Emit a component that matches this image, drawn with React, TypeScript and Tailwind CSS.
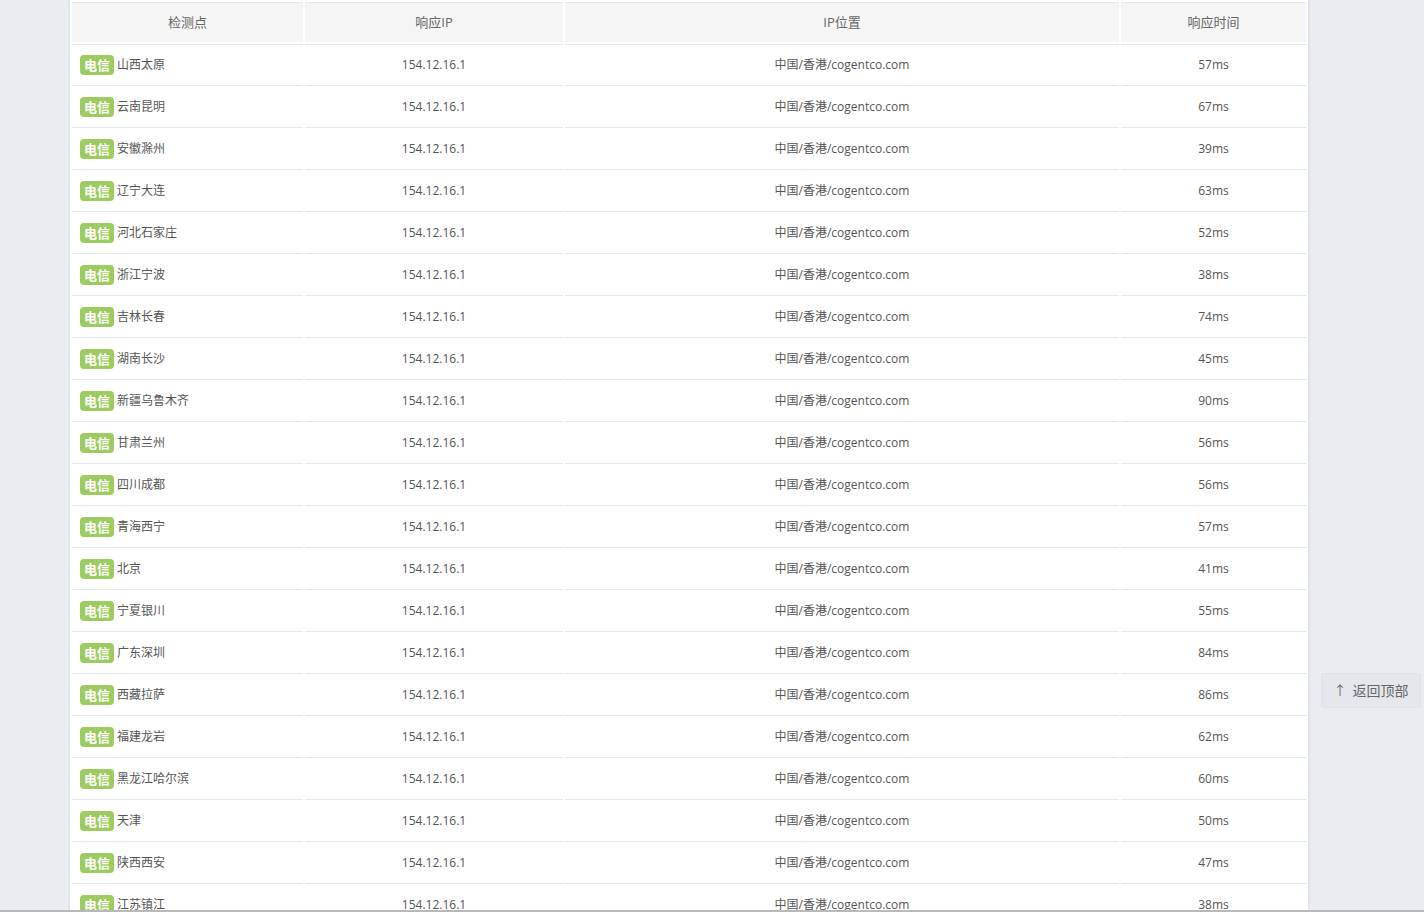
const rows = [
  { city: "山西太原", ms: 57 },
  { city: "云南昆明", ms: 67 },
  { city: "安徽滁州", ms: 39 },
  { city: "辽宁大连", ms: 63 },
  { city: "河北石家庄", ms: 52 },
  { city: "浙江宁波", ms: 38 },
  { city: "吉林长春", ms: 74 },
  { city: "湖南长沙", ms: 45 },
  { city: "新疆乌鲁木齐", ms: 90 },
  { city: "甘肃兰州", ms: 56 },
  { city: "四川成都", ms: 56 },
  { city: "青海西宁", ms: 57 },
  { city: "北京", ms: 41 },
  { city: "宁夏银川", ms: 55 },
  { city: "广东深圳", ms: 84 },
  { city: "西藏拉萨", ms: 86 },
  { city: "福建龙岩", ms: 62 },
  { city: "黑龙江哈尔滨", ms: 60 },
  { city: "天津", ms: 50 },
  { city: "陕西西安", ms: 47 },
  { city: "江苏镇江", ms: 38 },
  { city: "上海", ms: 44 },
];

export default function App() {
  return (
    <div
      className="h-[912px] overflow-hidden bg-[#e9edf2] text-[12px] text-[#555]"
      style={{ fontFamily: '"Open Sans", "Noto Sans CJK SC", sans-serif' }}
    >
      {/* result table */}
      <div className="ml-[70px] w-[1238px] bg-white pt-[2px] shadow-[0_0_3px_rgba(0,0,0,0.12)]">
        <table className="w-full table-fixed border-separate border-spacing-x-[2px] border-spacing-y-0">
          <colgroup>
            <col className="w-[231px]" />
            <col className="w-[258px]" />
            <col className="w-[554px]" />
            <col className="w-[185px]" />
          </colgroup>
          <thead>
            <tr>
              {["检测点", "响应IP", "IP位置", "响应时间"].map((h) => (
                <th
                  key={h}
                  className="h-[42px] border-t border-b-2 border-t-[#e6e6e6] border-b-white bg-[#f5f5f5] p-0 text-center text-[13px] font-normal text-[#666] shadow-[0_1px_0_#e3e8ee]"
                >
                  {h}
                </th>
              ))}
            </tr>
          </thead>
          <tbody>
            {rows.map((r) => (
              <tr key={r.city}>
                <td className="h-[42px] border-b border-[#e3e8ee] px-2">
                  <div className="flex items-center gap-[3px]">
                    <span className="rounded-[4px] bg-[#9ccc5f] px-1 py-0.5 text-[13px] leading-4 font-bold text-white">
                      电信
                    </span>
                    <span>{r.city}</span>
                  </div>
                </td>
                <td className="border-b border-[#e3e8ee] text-center">154.12.16.1</td>
                <td className="border-b border-[#e3e8ee] text-center">中国/香港/cogentco.com</td>
                <td className="border-b border-[#e3e8ee] text-center">{r.ms}ms</td>
              </tr>
            ))}
          </tbody>
        </table>
      </div>

      {/* back to top */}
      <button className="fixed left-[1321px] top-[673px] flex h-[35px] w-[100px] items-center justify-center gap-1.5 rounded-[2px] border border-[#dfe3e8] bg-[#e4e8ed] text-sm text-[#666]">
        <span className="text-[13px]">↑</span>
        <span>返回顶部</span>
      </button>

      <div className="fixed bottom-0 left-0 h-[2px] w-full bg-[#b9b9b9]" />
    </div>
  );
}
